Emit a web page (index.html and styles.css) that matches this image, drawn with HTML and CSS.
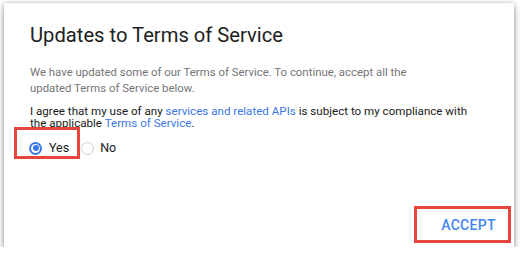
FILE: index.html
```html
<!DOCTYPE html>
<html lang="en">
<head>
    <meta charset="UTF-8">
    <meta name="viewport" content="width=device-width, initial-scale=1.0">
    <title>Updates to Terms of Service</title>
    <link rel="stylesheet" href="styles.css">
</head>
<body>
    <div class="dialog">
        <h1 class="dialog-title">Updates to Terms of Service</h1>

        <p class="intro">We have updated some of our Terms of Service. To continue, accept all the updated Terms of Service below.</p>

        <p class="agree">I agree that my use of any <a href="#">services and related APIs</a> is subject to my compliance with the applicable <a href="#">Terms of Service</a>.</p>

        <div class="options">
            <label class="option highlight">
                <span class="radio checked"></span>
                <span class="option-label">Yes</span>
            </label>
            <label class="option">
                <span class="radio"></span>
                <span class="option-label">No</span>
            </label>
        </div>

        <div class="actions">
            <button class="btn-accept highlight">ACCEPT</button>
        </div>
    </div>
</body>
</html>
```

FILE: styles.css
```css
* {
    margin: 0;
    padding: 0;
    box-sizing: border-box;
}

body {
    background-color: #fff;
    font-family: Roboto, 'Liberation Sans', sans-serif;
    color: #212121;
    overflow: hidden;
}

.dialog {
    display: flex;
    flex-direction: column;
    width: 510px;
    height: 244px;
    margin: 3px 0 0 4px;
    padding: 18px 3px 4px 26px;
    background-color: #fff;
    box-shadow: 0 3px 7px rgba(0, 0, 0, .35), 0 0 4px rgba(0, 0, 0, .2);
}

.dialog-title {
    font-size: 20.2px;
    font-weight: 400;
    line-height: 28px;
    color: #212121;
}

.intro {
    margin-top: 15px;
    padding-right: 70px;
    font-size: 11.4px;
    line-height: 16px;
    color: #757575;
}

.agree {
    margin-top: 10.2px;
    padding-right: 40px;
    font-size: 11.6px;
    line-height: 11.7px;
    color: #1a1a1a;
}

.agree a {
    color: #3b78e7;
    text-decoration: none;
}

.options {
    display: flex;
    align-items: flex-start;
    margin: -2.4px 0 0 -16px;
}

.option {
    display: flex;
    align-items: center;
    gap: 7px;
    padding-top: 14px;
    font-size: 12.5px;
    color: #212121;
}

.option + .option {
    margin-left: 1px;
    gap: 6px;
}

.highlight {
    border: 3px solid #e8453c;
}

.option.highlight {
    padding: 11px 8px 1px 12px;
}

.radio {
    width: 13px;
    height: 13px;
    border: 1px solid #d0d0d0;
    border-radius: 50%;
    position: relative;
}

.radio.checked {
    border: 2px solid #3b78e7;
}

.radio.checked::after {
    content: '';
    position: absolute;
    top: 1.5px;
    left: 1.5px;
    width: 6px;
    height: 6px;
    border-radius: 50%;
    background-color: #3b78e7;
}

.option-label {
    line-height: 14px;
}

.actions {
    display: flex;
    justify-content: flex-end;
    margin-top: auto;
}

.btn-accept {
    width: 97px;
    height: 37px;
    background: #fff;
    font-family: Roboto, 'Liberation Sans', sans-serif;
    font-size: 14px;
    font-weight: 500;
    letter-spacing: .3px;
    color: #4285f4;
    padding-left: 12px;
}
```
